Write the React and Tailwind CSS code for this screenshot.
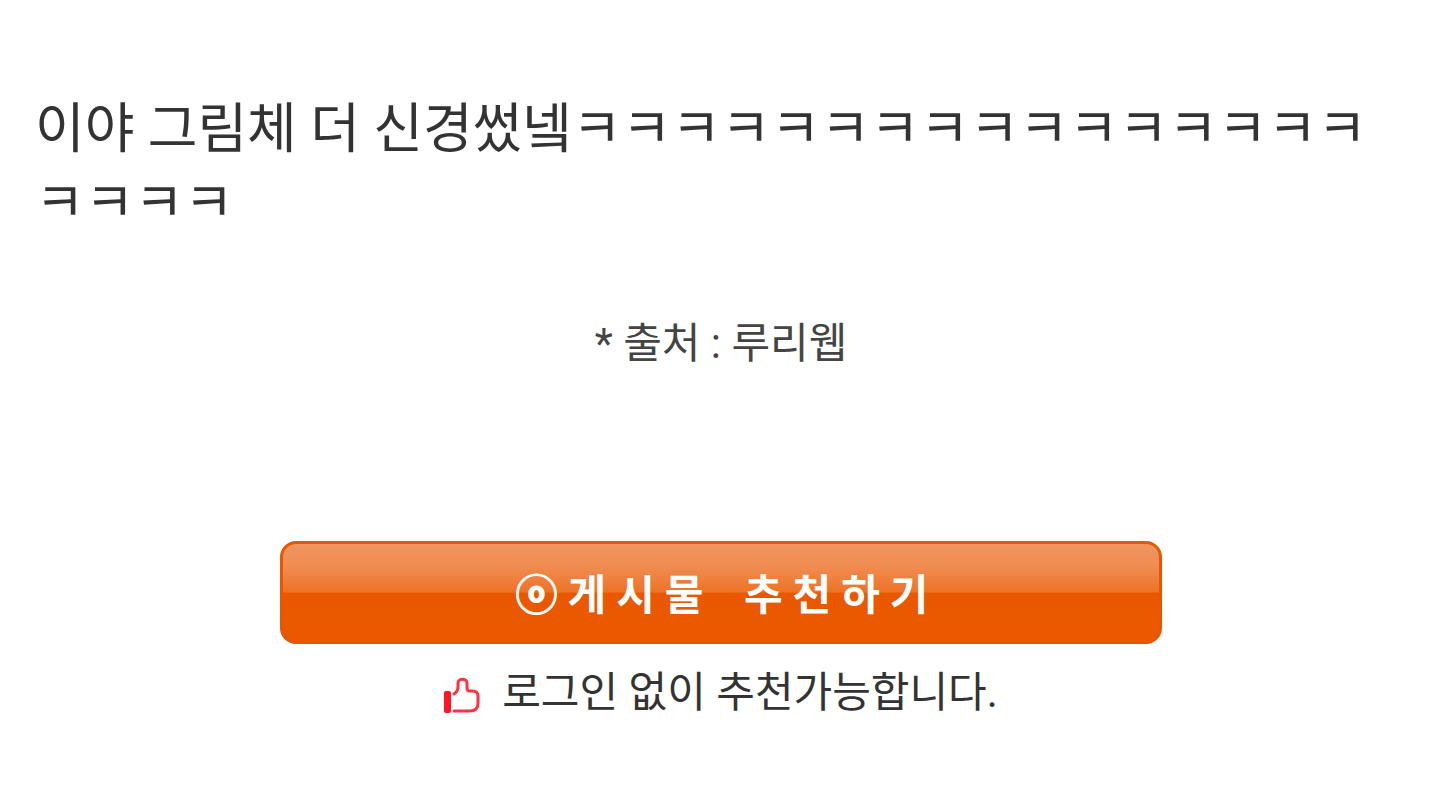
import React from 'react';

const ThumbIcon = () => (
  <svg className="mb-2.5 h-9 w-9 shrink-0" viewBox="0 0 36 36" fill="none" aria-hidden="true">
    <rect x="0" y="14" width="7" height="22" rx="2" fill="#ff1428" />
    <path
      d="M10 17C13 15 14 13 14 10V6C14 1 23 1 23 6V11C23 13 24 14 26 14H28C33 14 34 16 34 19V26C34 32 31 34 26 34H10"
      stroke="#ff3340"
      strokeWidth="3"
      strokeLinejoin="round"
      strokeLinecap="round"
    />
  </svg>
);

const App = () => {
  return (
    <main className="min-h-screen bg-white pt-[93px] pr-8 pb-16 pl-[35px] font-['Roboto','Noto_Sans_CJK_KR',sans-serif] text-[#333333]">
      <p className="text-[54px] leading-[74px] break-all">
        이야 그림체 더 신경썼넼ㅋㅋㅋㅋㅋㅋㅋㅋㅋㅋㅋㅋㅋㅋㅋㅋㅋㅋㅋㅋ
      </p>

      <p className="mt-[73px] text-center text-[42px] leading-[60px] text-[#444444]">* 출처 : 루리웹</p>

      <div className="mt-[167px] flex flex-col items-center">
        <button
          type="button"
          className="h-[103px] w-[882px] max-w-full rounded-2xl border-3 border-[#e75700] bg-[linear-gradient(#f09560_0%,#f08d53_22%,#ee7327_49%,#e95800_51%,#eb5800_100%)] pt-1.5 pl-3 text-[42px] font-bold tracking-[10px] text-white"
        >
          <span className="[-webkit-text-stroke:1px]">ⓞ</span>
          <span className="mr-2.5">게시물</span> 추천하기
        </button>
        <div className="mt-[19px] flex items-end gap-[22px]">
          <ThumbIcon />
          <p className="text-[42px] leading-[60px]">로그인 없이 추천가능합니다.</p>
        </div>
      </div>
    </main>
  );
};

export default App;
